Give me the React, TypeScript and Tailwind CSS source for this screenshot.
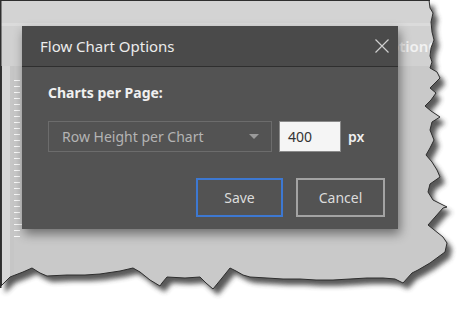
import React from "react";

// torn edge of the screenshot (clockwise, starting top right)
const edge: [number, number][] = [
  [429, 0], [430, 8], [433, 13], [431, 22], [432, 32], [434, 40], [431, 48], [430, 56],
  [432, 62], [430, 68], [437, 72], [440, 78], [435, 83], [430, 88], [436, 93], [431, 100],
  [425, 106], [431, 111], [440, 117], [432, 122], [430, 130], [434, 140], [430, 148],
  [426, 155], [432, 162], [437, 170], [440, 177], [430, 184], [428, 192], [433, 200],
  [447, 207], [443, 208], [428, 225], [443, 237], [447, 243], [445, 252], [430, 263],
  [418, 270], [412, 273], [403, 283], [395, 279], [383, 278], [367, 278], [350, 279],
  [333, 280], [316, 280], [300, 279], [283, 279], [267, 278], [250, 277], [243, 275],
  [236, 271], [230, 268], [222, 278], [213, 289], [206, 283], [200, 277], [185, 278],
  [167, 277], [162, 283], [160, 286], [150, 280], [140, 272], [133, 268], [120, 271],
  [100, 274], [85, 275], [67, 275], [47, 276], [40, 273], [32, 268], [23, 272],
  [10, 277], [0, 287], [0, 0],
];

const pts = edge.map(([x, y]) => `${x},${y}`).join(" ");
const clip = `polygon(${edge.map(([x, y]) => `${x}px ${y}px`).join(",")})`;

const font = { fontFamily: '"Noto Sans", "Open Sans", sans-serif' };

export default function App() {
  const ticks = Array.from({ length: 27 }, (_, i) => i);

  return (
    <div className="relative w-[468px] h-[313px] bg-white overflow-hidden" style={font}>
      {/* shadow behind torn paper */}
      <svg className="absolute inset-0" width="468" height="313">
        <defs>
          <filter id="blur" x="-10%" y="-10%" width="120%" height="120%">
            <feGaussianBlur stdDeviation="2.5" />
          </filter>
        </defs>
        <polygon points={pts} transform="translate(5,6)" fill="#3a3a3a" opacity="0.85" filter="url(#blur)" />
      </svg>

      {/* the app screenshot */}
      <div className="absolute inset-0 flex flex-col bg-[#c9c9c9]" style={{ clipPath: clip }}>
        <div className="h-[23px] bg-[#d3d3d3]" />
        <div className="h-[3px] bg-[#dbdbdb]" />
        <div className="h-[40px] bg-[#d1d1d1] flex items-center">
          <span className="ml-[378px] text-[15px] font-semibold text-[#f2f2f2] whitespace-nowrap">OptionO</span>
        </div>
        <div className="flex-1 flex">
          <div className="w-[2px] bg-[#3a3a3a]" />
          <div className="w-[8px] bg-[#d6d6d6]" />
          <div className="w-[4px] bg-[#c6c6c6]" />
          <div className="flex flex-col gap-[5px] pt-[14px]">
            {ticks.map((i) => (
              <div key={i} className={`h-[1px] bg-[#fafafa] ${i === 24 ? "w-[20px]" : "w-[6px]"}`} />
            ))}
          </div>
        </div>
      </div>

      {/* torn outline */}
      <svg className="absolute inset-0 pointer-events-none" width="468" height="313">
        <polygon points={pts} fill="none" stroke="#2e2e2e" strokeWidth="1" />
        <line x1="0.5" y1="0" x2="0.5" y2="288" stroke="#2e2e2e" strokeWidth="2" />
        <line x1="0" y1="0.5" x2="430" y2="0.5" stroke="#2e2e2e" strokeWidth="1" />
      </svg>

      {/* dialog */}
      <div className="absolute left-[22px] top-[26px] w-[376px] h-[203px] flex flex-col bg-[#535353] shadow-[2px_5px_10px_rgba(0,0,0,0.45)]">
        <div className="h-[41px] shrink-0 flex items-center justify-between pl-[18px] pr-[9px] bg-[#4a4a4a] border-b border-[#2f2f2f]">
          <span className="text-[15px] text-[#ececec]">Flow Chart Options</span>
          <svg width="14" height="14" viewBox="0 0 14 14">
            <path d="M0.5 0.5 L13.5 13.5 M13.5 0.5 L0.5 13.5" stroke="#cfcfcf" strokeWidth="1.2" />
          </svg>
        </div>

        <div className="flex-1 flex flex-col pl-[26px] pr-[13px] pt-[16px]">
          <div className="text-[14px] font-bold text-[#f0f0f0] leading-[20px]">Charts per Page:</div>

          <div className="flex items-center mt-[18px]">
            <div className="w-[224px] h-[31px] flex items-center justify-between pl-[13px] pr-[12px] border border-[#6c6c6c]">
              <span className="text-[14px] text-[#b4b4b4]">Row Height per Chart</span>
              <svg width="10" height="5" viewBox="0 0 10 5">
                <path d="M0 0 L10 0 L5 5 Z" fill="#9a9a9a" />
              </svg>
            </div>
            <div className="ml-[7px] w-[62px] h-[31px] flex items-center pl-[8px] bg-[#f5f5f5] border border-[#8a8a8a]">
              <span className="text-[14px] text-[#333]">400</span>
            </div>
            <span className="ml-[7px] text-[14px] font-semibold text-[#f0f0f0]">px</span>
          </div>

          <div className="flex justify-end gap-[13px] mt-[26px]">
            <button className="w-[87px] h-[39px] border-2 border-[#3d78d1] text-[14px] text-[#dcdcdc]">Save</button>
            <button className="w-[89px] h-[39px] border-2 border-[#a3a3a3] text-[14px] text-[#dcdcdc]">Cancel</button>
          </div>
        </div>
      </div>
    </div>
  );
}
